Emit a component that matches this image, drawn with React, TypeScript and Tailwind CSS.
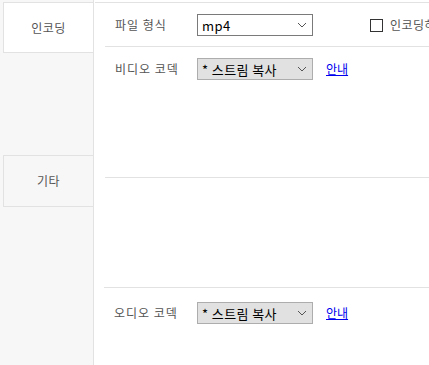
import { useState } from 'react';

const font = { fontFamily: '"Noto Sans CJK KR", "Noto Sans", sans-serif' };

function Chevron() {
  return (
    <svg width="10" height="6" viewBox="0 0 10 6" className="shrink-0">
      <path d="M1 1 L5 5 L9 1" fill="none" stroke="#555" strokeWidth="1" />
    </svg>
  );
}

function FakeSelect({ value, gray }: { value: string; gray?: boolean }) {
  return (
    <div
      className={
        'w-[116px] h-[22px] shrink-0 flex items-center justify-between pl-[4px] pr-[5px] text-[13px] font-normal text-black ' +
        (gray ? 'bg-[#e1e1e1] border border-[#adadad]' : 'bg-white border border-[#7a7a7a]')
      }
    >
      <span className="leading-none tracking-[0.4px]">{value}</span>
      <Chevron />
    </div>
  );
}

function Row({ label, children }: { label: string; children: React.ReactNode }) {
  return (
    <div className="flex items-center h-[22px]">
      <div className="w-[92px] shrink-0 pl-[10px] text-[12px] tracking-[1px] text-[#555] leading-none whitespace-nowrap">{label}</div>
      {children}
    </div>
  );
}

export default function App() {
  const [tab, setTab] = useState(0);
  const [checked, setChecked] = useState(false);

  return (
    <div className="w-[429px] h-[365px] flex bg-white overflow-hidden" style={font}>
      {/* sidebar */}
      <div className="w-[94px] shrink-0 bg-[#f7f7f7] border-r border-[#e2e2e2] pt-[2px] pl-[3px]">
        <button
          onClick={() => setTab(0)}
          className="w-[91px] h-[51px] mr-[-1px] flex items-center justify-center bg-white border border-[#e2e2e2] text-[12px] tracking-[0.5px] text-[#555]"
        >
          인코딩
        </button>
        <button
          onClick={() => setTab(1)}
          className={
            'mt-[102px] w-[91px] h-[52px] flex items-center justify-center border border-[#e2e2e2] text-[12px] tracking-[0.5px] text-[#555] ' +
            (tab === 1 ? 'bg-white' : 'bg-[#f7f7f7]')
          }
        >
          기타
        </button>
      </div>

      {/* content */}
      <div className="flex-1 min-w-0 mt-[2px] ml-[1px] border-t border-[#e2e2e2] overflow-hidden">
        <div className="ml-[10px] h-[44px] border-b border-[#e2e2e2] flex items-center pt-[1px]">
          <Row label="파일 형식">
            <FakeSelect value="mp4" />
            <label className="ml-[57px] flex items-center gap-[7px] text-[12px] tracking-[0.5px] text-[#555] whitespace-nowrap">
              <span
                onClick={() => setChecked(!checked)}
                className="w-[13px] h-[13px] border border-[#333] bg-white shrink-0"
              />
              인코딩하지 않음
            </label>
          </Row>
        </div>

        <div className="ml-[10px] h-[131px] border-b border-[#e2e2e2] pt-[11px]">
          <Row label="비디오 코덱">
            <FakeSelect value="* 스트림 복사" gray />
            <a className="ml-[13px] text-[12px] text-[#0000ee] underline">안내</a>
          </Row>
        </div>

        <div className="ml-[9px] h-[110px] border-b border-[#e2e2e2]" />

        <div className="ml-[9px] pt-[14px]">
          <Row label="오디오 코덱">
            <div className="ml-[1px]" />
            <FakeSelect value="* 스트림 복사" gray />
            <a className="ml-[13px] text-[12px] text-[#0000ee] underline">안내</a>
          </Row>
        </div>
      </div>
    </div>
  );
}
